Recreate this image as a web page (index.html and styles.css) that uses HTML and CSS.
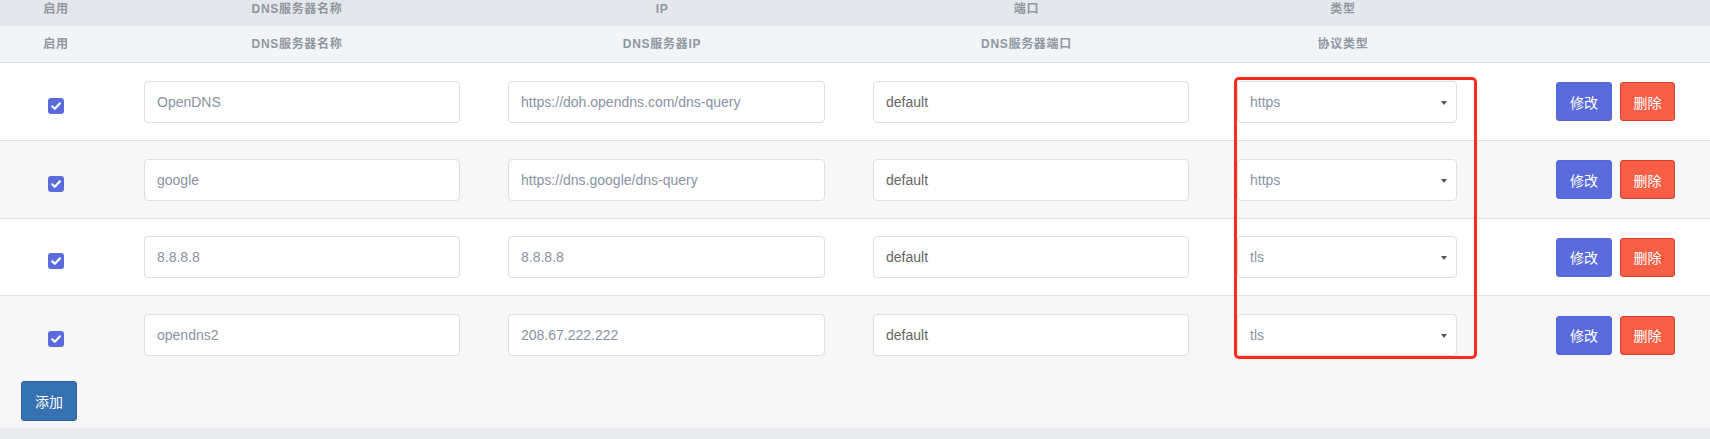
FILE: index.html
```html
<!DOCTYPE html>
<html lang="zh">
<head>
<meta charset="utf-8">
<title>DNS</title>
<link rel="stylesheet" href="styles.css">
</head>
<body>
<div class="panel">
  <div class="row head head-top">
    <div class="hc">启用</div>
    <div class="hc">DNS服务器名称</div>
    <div class="hc">IP</div>
    <div class="hc">端口</div>
    <div class="hc">类型</div>
    <div class="hc"></div>
  </div>
  <div class="row head head-sub">
    <div class="hc">启用</div>
    <div class="hc">DNS服务器名称</div>
    <div class="hc">DNS服务器IP</div>
    <div class="hc">DNS服务器端口</div>
    <div class="hc">协议类型</div>
    <div class="hc"></div>
  </div>

  <div class="row body">
    <div class="c c1"><span class="check"><svg viewBox="0 0 16 16" width="16" height="16"><path d="M4.2 8.3 L6.8 10.8 L11.8 5.4" fill="none" stroke="#fff" stroke-width="2.2" stroke-linecap="round" stroke-linejoin="round"/></svg></span></div>
    <div class="c c2"><div class="field">OpenDNS</div></div>
    <div class="c c3"><div class="field">https://doh.opendns.com/dns-query</div></div>
    <div class="c c4"><div class="field dark">default</div></div>
    <div class="c c5"><div class="field select">https<span class="caret"></span></div></div>
    <div class="c c6"><span class="btn edit">修改</span><span class="btn del">删除</span></div>
  </div>

  <div class="row body alt">
    <div class="c c1"><span class="check"><svg viewBox="0 0 16 16" width="16" height="16"><path d="M4.2 8.3 L6.8 10.8 L11.8 5.4" fill="none" stroke="#fff" stroke-width="2.2" stroke-linecap="round" stroke-linejoin="round"/></svg></span></div>
    <div class="c c2"><div class="field">google</div></div>
    <div class="c c3"><div class="field">https://dns.google/dns-query</div></div>
    <div class="c c4"><div class="field dark">default</div></div>
    <div class="c c5"><div class="field select">https<span class="caret"></span></div></div>
    <div class="c c6"><span class="btn edit">修改</span><span class="btn del">删除</span></div>
  </div>

  <div class="row body short">
    <div class="c c1"><span class="check"><svg viewBox="0 0 16 16" width="16" height="16"><path d="M4.2 8.3 L6.8 10.8 L11.8 5.4" fill="none" stroke="#fff" stroke-width="2.2" stroke-linecap="round" stroke-linejoin="round"/></svg></span></div>
    <div class="c c2"><div class="field">8.8.8.8</div></div>
    <div class="c c3"><div class="field">8.8.8.8</div></div>
    <div class="c c4"><div class="field dark">default</div></div>
    <div class="c c5"><div class="field select">tls<span class="caret"></span></div></div>
    <div class="c c6"><span class="btn edit">修改</span><span class="btn del">删除</span></div>
  </div>

  <div class="row body alt last">
    <div class="c c1"><span class="check"><svg viewBox="0 0 16 16" width="16" height="16"><path d="M4.2 8.3 L6.8 10.8 L11.8 5.4" fill="none" stroke="#fff" stroke-width="2.2" stroke-linecap="round" stroke-linejoin="round"/></svg></span></div>
    <div class="c c2"><div class="field">opendns2</div></div>
    <div class="c c3"><div class="field">208.67.222.222</div></div>
    <div class="c c4"><div class="field dark">default</div></div>
    <div class="c c5"><div class="field select">tls<span class="caret"></span></div></div>
    <div class="c c6"><span class="btn edit">修改</span><span class="btn del">删除</span></div>
  </div>

  <div class="footer">
    <span class="btn add">添加</span>
  </div>

  <div class="annot"></div>
</div>
</body>
</html>
```

FILE: styles.css
```css
html, body {
  margin: 0;
  padding: 0;
}
body {
  background: #e9eaee;
  font-family: "Liberation Sans", "Noto Sans CJK SC", sans-serif;
  height: 439px;
  overflow: hidden;
}
.panel {
  position: relative;
  background: #f7f7f7;
  width: 1710px;
}
.row {
  display: grid;
  grid-template-columns: 112px 370px 360px 369px 264px 1fr;
}
.head .hc {
  text-align: center;
  font-size: 12px;
  font-weight: bold;
  color: #8f97a1;
  letter-spacing: 0.7px;
}
.head-top {
  background: #e4e7eb;
  height: 26px;
}
.head-top .hc {
  line-height: 18px;
}
.head-sub {
  background: #f2f5f8;
  height: 36px;
  border-bottom: 1px solid #dcdfe3;
  align-items: center;
}
.head-sub .hc {
  line-height: 18px;
}
.body {
  height: 77px;
  background: #ffffff;
  border-bottom: 1px solid #e0e0e0;
  align-items: center;
}
.body.short {
  height: 76px;
}
.body.alt {
  background: #f7f7f7;
}
.body.last {
  border-bottom: none;
  height: 78px;
}
.c {
  display: flex;
  align-items: center;
}
.c1 {
  justify-content: center;
}
.c2 { padding: 0 22px 0 32px; }
.c3 { padding: 0 17px 0 26px; }
.c4 { padding: 0 22px 0 31px; }
.c5 { padding: 0 18px 0 26px; }
.c6 {
  padding-left: 81px;
  gap: 8px;
}
.check {
  display: block;
  width: 16px;
  height: 16px;
  margin-top: 8px;
  background: #5b6bdc;
  border-radius: 3px;
}
.check svg {
  display: block;
}
.field {
  position: relative;
  flex: 1;
  height: 40px;
  line-height: 40px;
  border: 1px solid #dcdfe5;
  border-radius: 4px;
  background: #fff;
  padding-left: 12px;
  font-size: 14px;
  color: #8893a4;
  white-space: nowrap;
  overflow: hidden;
}
.field.dark {
  color: #666666;
}
.caret {
  position: absolute;
  right: 9px;
  top: 19px;
  width: 0;
  height: 0;
  border-left: 3.5px solid transparent;
  border-right: 3.5px solid transparent;
  border-top: 4px solid #555;
}
.btn {
  display: inline-flex;
  align-items: center;
  justify-content: center;
  box-sizing: border-box;
  height: 39px;
  border-radius: 3px;
  font-size: 14px;
  color: #fff;
  font-family: "Noto Sans CJK SC", "Liberation Sans", sans-serif;
}
.edit {
  width: 56px;
  background: #5a6cdc;
  border: 1px solid #5566d6;
}
.del {
  width: 55px;
  background: #f65f46;
  border: 1px solid #d4422f;
}
.footer {
  height: 54px;
  padding: 7px 0 0 21px;
  box-sizing: border-box;
  background: #f7f7f7;
}
.add {
  width: 56px;
  height: 40px;
  background: #3671b1;
  border: 1px solid #2f639c;
}
.annot {
  position: absolute;
  left: 1234px;
  top: 77px;
  width: 237px;
  height: 276px;
  border: 3px solid #fb2a1c;
  border-radius: 5px;
}
```
